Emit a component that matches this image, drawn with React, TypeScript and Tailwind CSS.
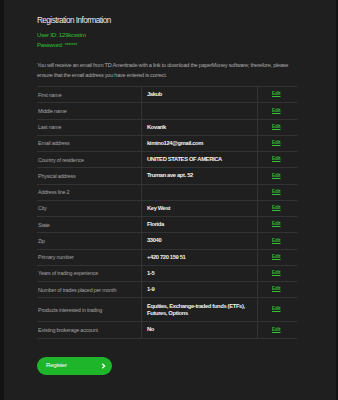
const ROWS: { label: string; value: string }[] = [
  { label: 'First name', value: 'Jakub' },
  { label: 'Middle name', value: '' },
  { label: 'Last name', value: 'Kovarik' },
  { label: 'Email address', value: 'kimino124@gmail.com' },
  { label: 'Country of residence', value: 'UNITED STATES OF AMERICA' },
  { label: 'Physical address', value: 'Truman ave apt. 52' },
  { label: 'Address line 2', value: '' },
  { label: 'City', value: 'Key West' },
  { label: 'State', value: 'Florida' },
  { label: 'Zip', value: '33040' },
  { label: 'Primary number', value: '+420 720 159 51' },
  { label: 'Years of trading experience', value: '1-5' },
  { label: 'Number of trades placed per month', value: '1-9' },
  { label: 'Products interested in trading', value: 'Equities, Exchange-traded funds (ETFs), Futures, Options' },
  { label: 'Existing brokerage account', value: 'No' },
];

export default function App() {
  return (
    <div
      className="flex h-[400px] w-[338px] bg-[#131313]"
      style={{ fontFamily: '"Liberation Sans", Arial, sans-serif' }}
    >
      <div className="ml-[4px] mr-[2px] flex-1 bg-[#1f1f1f] pl-[33px] pr-[39px] pt-[15px]">
        <h1 className="text-[8.2px] leading-[12px] tracking-[-0.55px] text-[#e8e8e8]">Registration Information</h1>
        <div className="mt-[4px] text-[6px] leading-[9.5px] tracking-[-0.2px] text-[#2fc02f]">
          <div>User ID: 129kcsstm</div>
          <div>
            Password: <span className="align-top text-[5px]">*******</span>
          </div>
        </div>
        <p className="mt-[10px] w-[258px] text-[5.6px] leading-[10px] tracking-[-0.25px] text-[#a9a9a9]">
          You will receive an email from TD Ameritrade with a link to download the paperMoney software; therefore, please
          ensure that the email address you have entered is correct.
        </p>
        <div className="mt-[6px] border-b border-[#333]">
          {ROWS.map((row) => {
            const tall = row.value.length > 40;
            return (
              <div
                key={row.label}
                className={`flex border-t border-[#333] ${tall ? 'h-[24px]' : 'h-[16.25px]'}`}
              >
                <div className="flex w-[105px] items-center border-r border-[#333] pl-[1px] text-[5.4px] tracking-[-0.2px] text-[#a2a2a2]">
                  {row.label}
                </div>
                <div className="flex w-[116px] items-center border-r border-[#333] pl-[5px] pr-[4px] text-[5.8px] font-bold leading-[7px] tracking-[-0.35px] text-[#f2f2f2]">
                  {row.value}
                </div>
                <div className="flex flex-1 items-center pl-[14px]">
                  <a className="text-[4.5px] font-bold text-[#33c233] underline">Edit</a>
                </div>
              </div>
            );
          })}
        </div>
        <button className="mt-[18px] flex h-[18px] w-[75px] items-center justify-between rounded-full bg-[#1fb52b] pl-[9px] pr-[6px] text-[6px] tracking-[-0.2px] text-white">
          <span>Register</span>
          <svg width="5" height="6" viewBox="0 0 5 6" fill="none">
            <path d="M1.2 0.8 L3.6 3 L1.2 5.2" stroke="white" strokeWidth="1.3" />
          </svg>
        </button>
      </div>
    </div>
  );
}
